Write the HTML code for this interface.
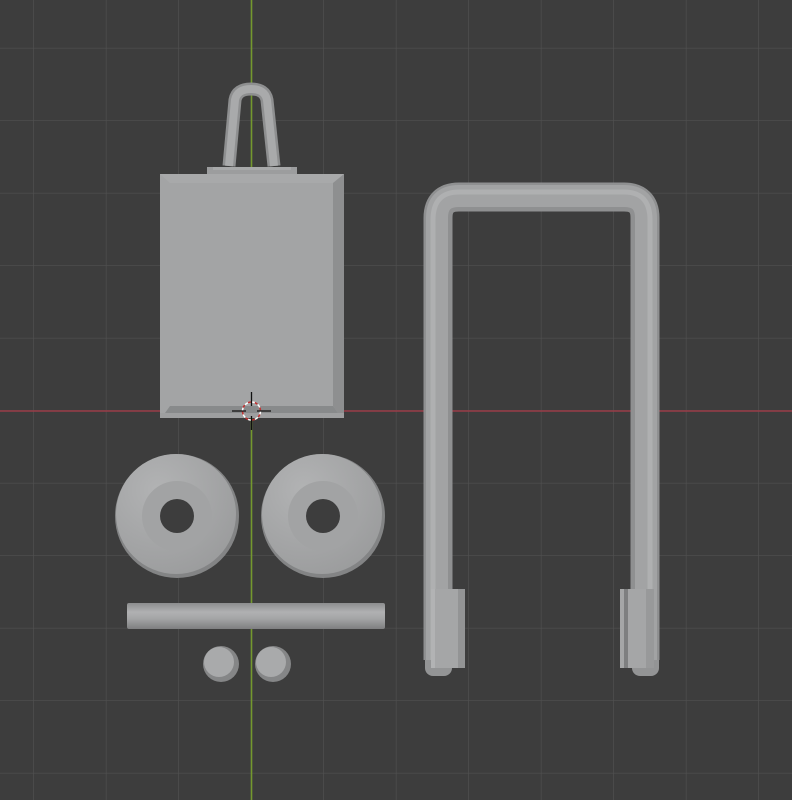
<!DOCTYPE html>
<html><head><style>html,body{margin:0;padding:0;background:#3d3d3d;overflow:hidden}svg{display:block}</style></head>
<body>
<svg width="792" height="800" viewBox="0 0 792 800" xmlns="http://www.w3.org/2000/svg">
<defs>
<pattern id="g" x="-38.5" y="-24" width="72.5" height="72.5" patternUnits="userSpaceOnUse">
<path d="M72.5 0V72.5M0 72.5H72.5" stroke="#505050" stroke-width="1.3" fill="none"/>
</pattern>
<linearGradient id="th" x1="0" x2="0" y1="0" y2="1">
<stop offset="0" stop-color="#8c8d8e"/><stop offset="0.35" stop-color="#b0b1b2"/><stop offset="0.6" stop-color="#a4a5a6"/><stop offset="1" stop-color="#7e7f80"/>
</linearGradient>
<radialGradient id="w" cx="0.35" cy="0.3" r="0.8">
<stop offset="0" stop-color="#b2b3b4"/><stop offset="1" stop-color="#9a9b9c"/>
</radialGradient>
</defs>
<rect width="792" height="800" fill="#3d3d3d"/>
<rect width="792" height="800" fill="url(#g)"/>
<line x1="0" y1="411" x2="792" y2="411" stroke="#9a3c48" stroke-width="1.6"/>
<line x1="251.5" y1="0" x2="251.5" y2="800" stroke="#74982e" stroke-width="1.6"/>

<!-- hook -->
<path d="M229 166 L235 100 Q237 89 251 89 Q265 89 267 100 L274 166" fill="none" stroke="#8e8f90" stroke-width="13"/>
<path d="M229 166 L235 100 Q237 89 251 89 Q265 89 267 100 L274 166" fill="none" stroke="#a9aaab" stroke-width="8"/>
<!-- box -->
<rect x="207" y="167" width="90" height="8" fill="#9c9d9e"/>
<rect x="213" y="167" width="78" height="3" fill="#a8a9aa"/>
<rect x="160" y="174" width="184" height="244" fill="#a3a4a5"/>
<polygon points="160,174 344,174 333,183 170,183" fill="#a8a9aa"/>
<polygon points="333,183 344,174 344,418 338,413 333,406" fill="#8e8f90"/>
<polygon points="170,406 333,406 338,413 165,413" fill="#888a8b"/>
<rect x="160" y="413" width="184" height="5" fill="#9e9fa0"/>
<!-- cursor -->
<circle cx="251.5" cy="411" r="9" fill="none" stroke="#fff" stroke-width="1.5" stroke-dasharray="4 3"/>
<circle cx="251.5" cy="411" r="9" fill="none" stroke="#c03030" stroke-width="1.5" stroke-dasharray="3 4" stroke-dashoffset="3.5"/>
<path d="M232 411h14M257 411h14M251.5 392v14M251.5 416v14" stroke="#111" stroke-width="1.3"/>

<!-- washers -->
<circle cx="177" cy="516" r="62" fill="#838485"/>
<circle cx="176" cy="514" r="60" fill="url(#w)"/>
<circle cx="177" cy="516" r="35" fill="#a2a3a4"/>
<circle cx="177" cy="516" r="17" fill="#3d3d3d"/>
<circle cx="323" cy="516" r="62" fill="#838485"/>
<circle cx="322" cy="514" r="60" fill="url(#w)"/>
<circle cx="323" cy="516" r="35" fill="#a2a3a4"/>
<circle cx="323" cy="516" r="17" fill="#3d3d3d"/>
<!-- rod -->
<rect x="127" y="603" width="258" height="26" rx="2" fill="url(#th)"/>
<!-- small discs -->
<circle cx="221" cy="664" r="18" fill="#858687"/>
<circle cx="219" cy="662" r="15" fill="#a9aaab"/>
<circle cx="273" cy="664" r="18" fill="#858687"/>
<circle cx="271" cy="662" r="15" fill="#a9aaab"/>

<!-- U bracket -->
<rect x="425" y="640" width="27" height="36" rx="8" fill="#939495"/>
<rect x="632" y="640" width="27" height="36" rx="8" fill="#939495"/>
<path d="M438 660 V218 Q438 197 459 197 H624 Q645 197 645 218 V660" fill="none" stroke="#8f9091" stroke-width="29"/>
<path d="M437 660 V218 Q437 196 459 196 H624 Q646 196 646 218 V660" fill="none" stroke="#a2a3a4" stroke-width="22"/>
<path d="M433 660 V220 Q433 192 459 192 H624 Q650 192 650 220 V660" fill="none" stroke="#afb0b1" stroke-width="5"/>
<rect x="431" y="589" width="34" height="79" fill="#a5a6a7"/>
<rect x="431" y="589" width="4" height="79" fill="#b2b3b4"/>
<rect x="458" y="589" width="7" height="79" fill="#939495"/>
<rect x="620" y="589" width="34" height="79" fill="#a5a6a7"/>
<rect x="624" y="589" width="4" height="79" fill="#7e7f80"/>
<rect x="646" y="589" width="8" height="79" fill="#98999a"/>
</svg>
</body></html>
